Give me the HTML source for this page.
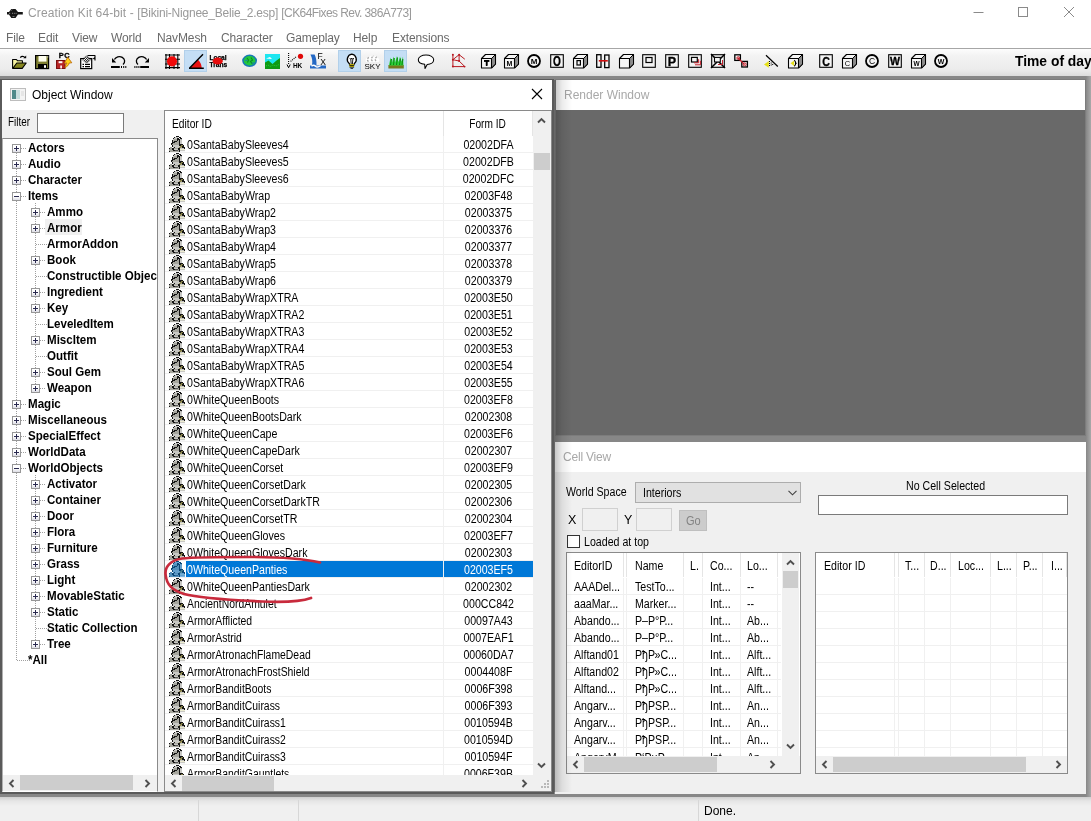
<!DOCTYPE html>
<html><head><meta charset="utf-8"><title>Creation Kit</title>
<style>
*{box-sizing:border-box}
html,body{margin:0;padding:0}
body{width:1091px;height:821px;overflow:hidden;position:relative;background:#ababab;font-family:"Liberation Sans",sans-serif;font-size:11px;color:#000}
#root{position:absolute;left:0;top:0;width:1091px;height:821px;overflow:hidden;will-change:transform}
.a{position:absolute}
.t{position:absolute;white-space:pre;line-height:14px}
#title{left:0;top:0;width:1091px;height:27px;background:#fff}
#menu{left:0;top:27px;width:1091px;height:21px;background:#fff}
#menu span{position:absolute;top:3px;font-size:12px;line-height:16px;color:#6a6a6a;white-space:pre;letter-spacing:-.12px}
#tb{left:0;top:48px;width:1091px;height:28px;border-top:1px solid #a6a6a6;background:linear-gradient(#fdfdfd 0,#f3f3f3 25%,#ececec 75%,#dcdcdc 100%)}
#tb svg{position:absolute;top:4px;width:16px;height:16px;overflow:visible}
.pr{position:absolute;top:1px;width:23px;height:22px;background:#c4def5;border:1px solid #b2d0ea}
.win{position:absolute;background:#f0f0f0}
.wt{position:absolute;left:0;top:0;right:0;height:30px;background:#fff}
.lv{position:absolute;background:#fff;border:1px solid #8a8a8a;overflow:hidden}
.row{position:absolute;left:0;height:17px;border-bottom:1px solid #f0f0f0;width:100%}
.ls{font-size:12.500px;transform:scaleX(.85);transform-origin:0 50%}
.ls.c{transform-origin:50% 50%}
.tr{position:absolute;font-weight:bold;font-size:12.500px;line-height:16px;height:16px;white-space:pre;transform:scaleX(.925);transform-origin:0 50%}
.pm{position:absolute;width:9px;height:9px;border:1px solid #979797;background:linear-gradient(#fff,#fff 50%,#dcdce4)}
.pm:before{content:"";position:absolute;left:1px;top:3px;width:5px;height:1px;background:#2a2a50}
.pm.p:after{content:"";position:absolute;left:3px;top:1px;width:1px;height:5px;background:#2a2a50}
.dh{position:absolute;height:0;border-top:1px dotted #a0a0a0}
.dv{position:absolute;width:0;border-left:1px dotted #a0a0a0}
.sb{position:absolute;background:#f0f0f0}
.th{position:absolute;background:#cdcdcd}
.arm{position:absolute;width:16px;height:16px}
.arm i{position:absolute;left:-1px;top:-1px;width:1px;height:1px;box-shadow:8px 1px #141414,9px 1px #141414,10px 1px #141414,6px 2px #141414,7px 2px #c8c8c4,8px 2px #c8c8c4,9px 2px #c8c8c4,10px 2px #f4f4f4,11px 2px #141414,12px 2px #141414,5px 3px #141414,6px 3px #c8c8c4,7px 3px #c8c8c4,8px 3px #c8c8c4,9px 3px #141414,10px 3px #141414,11px 3px #f4f4f4,12px 3px #141414,13px 3px #141414,5px 4px #c8c8c4,6px 4px #a6a69e,7px 4px #a6a69e,8px 4px #a6a69e,9px 4px #141414,10px 4px #141414,11px 4px #141414,12px 4px #c8c8c4,13px 4px #a0a0a0,4px 5px #141414,5px 5px #a6a69e,6px 5px #a6a69e,7px 5px #a6a69e,8px 5px #a6a69e,9px 5px #141414,10px 5px #a6a69e,11px 5px #141414,12px 5px #c8c8c4,13px 5px #c8c8c4,4px 6px #141414,5px 6px #a6a69e,6px 6px #141414,7px 6px #141414,8px 6px #141414,9px 6px #a6a69e,10px 6px #a6a69e,11px 6px #141414,12px 6px #c8c8c4,13px 6px #c8c8c4,4px 7px #141414,5px 7px #141414,6px 7px #141414,7px 7px #a6a69e,8px 7px #a6a69e,9px 7px #a6a69e,10px 7px #a6a69e,11px 7px #141414,12px 7px #c8c8c4,13px 7px #c8c8c4,3px 8px #141414,4px 8px #141414,5px 8px #a6a69e,6px 8px #a6a69e,7px 8px #a6a69e,8px 8px #a6a69e,9px 8px #a6a69e,10px 8px #a6a69e,11px 8px #141414,12px 8px #c8c8c4,13px 8px #c8c8c4,3px 9px #141414,4px 9px #a6a69e,5px 9px #a6a69e,6px 9px #a6a69e,7px 9px #a6a69e,8px 9px #a6a69e,9px 9px #a6a69e,10px 9px #a6a69e,11px 9px #141414,12px 9px #141414,13px 9px #141414,14px 9px #141414,4px 10px #141414,5px 10px #c8c8c4,6px 10px #c8c8c4,7px 10px #c8c8c4,8px 10px #c8c8c4,9px 10px #c8c8c4,10px 10px #c8c8c4,11px 10px #141414,12px 10px #141414,13px 10px #868048,14px 10px #868048,15px 10px #141414,4px 11px #141414,5px 11px #c8c8c4,6px 11px #c8c8c4,7px 11px #c8c8c4,8px 11px #c8c8c4,9px 11px #c8c8c4,10px 11px #c8c8c4,11px 11px #c8c8c4,12px 11px #868048,13px 11px #868048,14px 11px #141414,15px 11px #141414,2px 12px #a6a69e,3px 12px #a6a69e,5px 12px #c8c8c4,6px 12px #141414,7px 12px #c8c8c4,8px 12px #c8c8c4,9px 12px #c8c8c4,10px 12px #c8c8c4,11px 12px #868048,12px 12px #868048,13px 12px #aaa678,14px 12px #141414,15px 12px #141414,16px 12px #141414,1px 13px #141414,2px 13px #a6a69e,3px 13px #a6a69e,4px 13px #141414,5px 13px #141414,6px 13px #a6a69e,7px 13px #a6a69e,8px 13px #a6a69e,9px 13px #a6a69e,10px 13px #141414,11px 13px #141414,12px 13px #c8c8c4,13px 13px #c8c8c4,14px 13px #c8c8c4,15px 13px #c8c8c4,16px 13px #141414,1px 14px #a6a69e,2px 14px #a6a69e,3px 14px #a6a69e,4px 14px #141414,5px 14px #141414,6px 14px #c8c8c4,7px 14px #c8c8c4,8px 14px #c8c8c4,9px 14px #c8c8c4,10px 14px #141414,11px 14px #141414,12px 14px #ecebd0,13px 14px #ecebd0,14px 14px #ecebd0,15px 14px #ecebd0,16px 14px #ecebd0,1px 15px #a6a69e,2px 15px #a6a69e,3px 15px #a6a69e,4px 15px #a6a69e,5px 15px #141414,6px 15px #141414,7px 15px #555,8px 15px #555,9px 15px #555,10px 15px #a6a69e,11px 15px #141414,12px 15px #c8c8c4,13px 15px #c8c8c4,14px 15px #c8c8c4,15px 15px #c8c8c4,16px 15px #c8c8c4,1px 16px #141414,2px 16px #a6a69e,3px 16px #a6a69e,4px 16px #a6a69e,5px 16px #a6a69e,6px 16px #a6a69e,7px 16px #a6a69e,8px 16px #a6a69e,9px 16px #a6a69e,10px 16px #a6a69e,11px 16px #141414,12px 16px #f4f4f4,13px 16px #f4f4f4,14px 16px #f4f4f4,15px 16px #f4f4f4,16px 16px #f4f4f4}
.arm.s i{box-shadow:8px 1px #0a4675,9px 1px #0a4675,10px 1px #0a4675,6px 2px #0a4675,7px 2px #64a0cd,8px 2px #64a0cd,9px 2px #64a0cd,10px 2px #7ab6e5,11px 2px #0a4675,12px 2px #0a4675,5px 3px #0a4675,6px 3px #64a0cd,7px 3px #64a0cd,8px 3px #64a0cd,9px 3px #0a4675,10px 3px #0a4675,11px 3px #7ab6e5,12px 3px #0a4675,13px 3px #0a4675,5px 4px #64a0cd,6px 4px #538fba,7px 4px #538fba,8px 4px #538fba,9px 4px #0a4675,10px 4px #0a4675,11px 4px #0a4675,12px 4px #64a0cd,13px 4px #508cbb,4px 5px #0a4675,5px 5px #538fba,6px 5px #538fba,7px 5px #538fba,8px 5px #538fba,9px 5px #0a4675,10px 5px #538fba,11px 5px #0a4675,12px 5px #64a0cd,13px 5px #64a0cd,4px 6px #0a4675,5px 6px #538fba,6px 6px #0a4675,7px 6px #0a4675,8px 6px #0a4675,9px 6px #538fba,10px 6px #538fba,11px 6px #0a4675,12px 6px #64a0cd,13px 6px #64a0cd,4px 7px #0a4675,5px 7px #0a4675,6px 7px #0a4675,7px 7px #538fba,8px 7px #538fba,9px 7px #538fba,10px 7px #538fba,11px 7px #0a4675,12px 7px #64a0cd,13px 7px #64a0cd,3px 8px #0a4675,4px 8px #0a4675,5px 8px #538fba,6px 8px #538fba,7px 8px #538fba,8px 8px #538fba,9px 8px #538fba,10px 8px #538fba,11px 8px #0a4675,12px 8px #64a0cd,13px 8px #64a0cd,3px 9px #0a4675,4px 9px #538fba,5px 9px #538fba,6px 9px #538fba,7px 9px #538fba,8px 9px #538fba,9px 9px #538fba,10px 9px #538fba,11px 9px #0a4675,12px 9px #0a4675,13px 9px #0a4675,14px 9px #0a4675,4px 10px #0a4675,5px 10px #64a0cd,6px 10px #64a0cd,7px 10px #64a0cd,8px 10px #64a0cd,9px 10px #64a0cd,10px 10px #64a0cd,11px 10px #0a4675,12px 10px #0a4675,13px 10px #437c8f,14px 10px #437c8f,15px 10px #0a4675,4px 11px #0a4675,5px 11px #64a0cd,6px 11px #64a0cd,7px 11px #64a0cd,8px 11px #64a0cd,9px 11px #64a0cd,10px 11px #64a0cd,11px 11px #64a0cd,12px 11px #437c8f,13px 11px #437c8f,14px 11px #0a4675,15px 11px #0a4675,2px 12px #538fba,3px 12px #538fba,5px 12px #64a0cd,6px 12px #0a4675,7px 12px #64a0cd,8px 12px #64a0cd,9px 12px #64a0cd,10px 12px #64a0cd,11px 12px #437c8f,12px 12px #437c8f,13px 12px #558fa7,14px 12px #0a4675,15px 12px #0a4675,16px 12px #0a4675,1px 13px #0a4675,2px 13px #538fba,3px 13px #538fba,4px 13px #0a4675,5px 13px #0a4675,6px 13px #538fba,7px 13px #538fba,8px 13px #538fba,9px 13px #538fba,10px 13px #0a4675,11px 13px #0a4675,12px 13px #64a0cd,13px 13px #64a0cd,14px 13px #64a0cd,15px 13px #64a0cd,16px 13px #0a4675,1px 14px #538fba,2px 14px #538fba,3px 14px #538fba,4px 14px #0a4675,5px 14px #0a4675,6px 14px #64a0cd,7px 14px #64a0cd,8px 14px #64a0cd,9px 14px #64a0cd,10px 14px #0a4675,11px 14px #0a4675,12px 14px #76b1d3,13px 14px #76b1d3,14px 14px #76b1d3,15px 14px #76b1d3,16px 14px #76b1d3,1px 15px #538fba,2px 15px #538fba,3px 15px #538fba,4px 15px #538fba,5px 15px #0a4675,6px 15px #0a4675,7px 15px #2a6696,8px 15px #2a6696,9px 15px #2a6696,10px 15px #538fba,11px 15px #0a4675,12px 15px #64a0cd,13px 15px #64a0cd,14px 15px #64a0cd,15px 15px #64a0cd,16px 15px #64a0cd,1px 16px #0a4675,2px 16px #538fba,3px 16px #538fba,4px 16px #538fba,5px 16px #538fba,6px 16px #538fba,7px 16px #538fba,8px 16px #538fba,9px 16px #538fba,10px 16px #538fba,11px 16px #0a4675,12px 16px #7ab6e5,13px 16px #7ab6e5,14px 16px #7ab6e5,15px 16px #7ab6e5,16px 16px #7ab6e5}
.hd{position:absolute;top:0;height:24px;border-right:1px solid #e5e5e5;background:#fff}
</style></head>
<body><div id="root">
<div id="title" class="a"><svg class="a" style="left:0;top:0" width="27" height="27" viewBox="0 0 27 27"><path d="M7 12h2l2.300-3h4.200l2.500 3h4.800v2.600h-4.800l-2.500 3.300h-4.200l-2.300-3.300h-2z" fill="#161616"/><path d="M9 13.300h2M12 13.300h5" stroke="#9a9a9a" stroke-width=".9" stroke-dasharray="1 .8"/><path d="M11 10.800l1.200-1.300M12.500 16.500h2" stroke="#8a8a8a" stroke-width=".8"/></svg><span class="t" style="left:28px;top:5px;font-size:12px;line-height:16px;color:#999;letter-spacing:-0.22px"><span style="letter-spacing:.12px">Creation Kit 64-bit - </span>[Bikini-Nignee_Belie_2.esp] <span style="letter-spacing:-.58px">[CK64Fixes Rev. 386A773]</span></span><svg class="a" style="left:960px;top:0" width="131" height="27" viewBox="0 0 131 27" fill="none" stroke="#8a8a8a" stroke-width="1"><path d="M13.5 12.5h10"/><rect x="58.5" y="7.5" width="9" height="9"/><path d="M104 7l10 10M114 7l-10 10"/></svg></div>
<div id="menu" class="a"><span style="left:6px">File</span><span style="left:38px">Edit</span><span style="left:72px">View</span><span style="left:111px">World</span><span style="left:157px">NavMesh</span><span style="left:221px">Character</span><span style="left:286px">Gameplay</span><span style="left:353px">Help</span><span style="left:392px">Extensions</span></div>
<div id="tb" class="a"><div class="pr" style="left:184px"></div><div class="pr" style="left:338px"></div><div class="pr" style="left:384px"></div><svg style="left:12px" viewBox="0 0 16 16"><path d="M.6 15.400V6.500h3.800l1 1.200h5v2.300" fill="#f6f3a0" stroke="#000" stroke-width="1.100" stroke-linejoin="round"/><path d="M.8 15.400l4-5.400h9.400l-4 5.400z" fill="#86861e" stroke="#000" stroke-width="1.100" stroke-linejoin="round"/><path d="M8.300 4.600c1-1.600 3.600-1.700 4.700.2" fill="none" stroke="#000" stroke-width="1.100"/><path d="M11.400 5.200h2.800v-2.600z" fill="#000"/></svg><svg style="left:35px" viewBox="0 0 16 16"><rect x=".6" y="2.600" width="13" height="13" fill="#7e7e30" stroke="#000" stroke-width="1.200"/><rect x="3.500" y="3" width="8" height="5.600" fill="#fffff0"/><rect x="3" y="11" width="9" height="5" fill="#000"/><rect x="9" y="12.200" width="2" height="2.600" fill="#fff"/><rect x="12.300" y="3.400" width="1" height="1" fill="#fff"/></svg><svg style="left:56px" viewBox="0 0 16 16"><text x="8.500" y="4.900" font-size="7.400" text-anchor="middle" letter-spacing=".5" stroke="#000" stroke-width=".3" font-family="Liberation Sans,sans-serif" font-weight="bold">PC</text><rect x=".5" y="7.500" width="8.500" height="8" fill="#b82525" stroke="#7a1010"/><rect x="2.600" y="8.200" width="3.800" height="2" fill="#fff"/><rect x="4.300" y="12.500" width="1.600" height="3" fill="#fff"/><path d="M8.800 14.500c.8-2 1.300-3.300 2.200-4.500l-2.800 .2 3.600-6 4 5.600-2.600 .2c-.4 2-1.800 3.600-4.400 4.500z" fill="#ffd21a" stroke="#b86000" stroke-width=".8" stroke-linejoin="round"/></svg><svg style="left:80px" viewBox="0 0 16 16"><rect x=".7" y="5.600" width="11" height="10" fill="#fff" stroke="#000" stroke-width="1.200"/><path d="M2.500 11.400h1.500M5 11.400h5M2.500 13.600h1.500M5 13.600h5" stroke="#000" stroke-width="1.200"/><path d="M2.400 7.400l4.200-4.600 4.200 4.600-4.200 2.600z" fill="#fff"/><path d="M2.400 7.400l4.200-4.600 4.200 4.600M3.800 8.300l4.200-4.400M5.200 9.200l4.200-4.400M9.400 8.300l-4.200-4.400M8 9.200l-4.200-4.400M6.600 10l-2.800-2.800M6.600 10l2.800-2.800" fill="none" stroke="#000" stroke-width=".7"/><path d="M7.500 2.500h7.500M15 2.300v5.200" stroke="#000" stroke-width="1.100" fill="none"/><path d="M15 6.300l-2.600-.2 2.600-2z" fill="#000"/></svg><svg style="left:111px" viewBox="0 0 16 16"><path d="M12 11.500a5.300 4.600 0 1 0 -8.600-5" fill="none" stroke="#000" stroke-width="1.300"/><path d="M1 5v4.400h4.200z" fill="#000"/><rect x="0" y="13" width="8.800" height="2" fill="#000"/><rect x="10" y="13" width="1" height="2"/><rect x="12.200" y="13" width="1" height="2"/><rect x="14.300" y="13" width="1" height="2"/></svg><svg style="left:134px" viewBox="0 0 16 16"><path d="M4 11.500a5.300 4.600 0 1 1 8.600-5" fill="none" stroke="#000" stroke-width="1.300"/><path d="M15 5v4.400h-4.200z" fill="#000"/><rect x="6.200" y="13" width="8.800" height="2" fill="#000"/><rect x="0.400" y="13" width="1" height="2"/><rect x="2.400" y="13" width="1" height="2"/><rect x="4.400" y="13" width="1" height="2"/></svg><svg style="left:165px" viewBox="0 0 16 16"><path d="M1 1v15M4.500 1v15M9 1v15M12.800 1v15M0 2h15M0 6.300h15M0 11h15M0 14.600h15" stroke="#000" stroke-width="1.100" fill="none"/><circle cx="7" cy="8.300" r="5.100" fill="#f00808"/></svg><svg style="left:189px" viewBox="0 0 16 16"><path d="M.4 15.300L9 6.700A12.200 12.200 0 0 1 12.700 15.300z" fill="#e81010"/><path d="M0 15.300h14.800M.4 15.300L14 1.300" stroke="#000" stroke-width="1.400" fill="none"/></svg><svg style="left:210px" viewBox="0 0 16 16"><text x="8" y="6.500" font-size="6.600" text-anchor="middle" stroke="#000" stroke-width=".25" font-family="Liberation Sans,sans-serif" font-weight="bold">Local</text><text x="8.300" y="13.700" font-size="6.600" text-anchor="middle" stroke="#000" stroke-width=".25" font-family="Liberation Sans,sans-serif" font-weight="bold">Trans</text><ellipse cx="7.700" cy="8.100" rx="5.200" ry="3.500" fill="#e80c0c"/></svg><svg style="left:242px" viewBox="0 0 16 16"><ellipse cx="7.600" cy="7.800" rx="7.400" ry="6.200" fill="#1878b4"/><ellipse cx="7.600" cy="7.800" rx="5.800" ry="4.700" fill="#22c83c"/><path d="M5 5l1.500 2-1 2.500M9 4.500l1.500 2.500-2 1.500 2 2.500" stroke="#0a8a2a" fill="none" stroke-width="1.100"/><path d="M3 8c1-1 2-1 2.500 0M10 10c1 .5 2 0 2.500-1" stroke="#1878b4" fill="none"/></svg><svg style="left:265px" viewBox="0 0 16 16"><rect x="0" y="1" width="15" height="15" fill="#1ee6f0"/><path d="M1 5.500l4-1.500 2 2z" fill="#fff"/><path d="M0 16V9.500l3.500-2 4 3.500 4-3.500 3.500-2.500V16z" fill="#0e9a14"/><path d="M1 13l2-1 2 1.500 3-1.500 3 1 3-1.500" stroke="#2cd43c" fill="none" stroke-dasharray="1 1.200"/></svg><svg style="left:287px" viewBox="0 0 16 16"><path d="M1.600 0v12" stroke="#000" stroke-width="1.100" stroke-dasharray="1 1"/><path d="M0 11.500l1.600 3.200 1.600-3.200" fill="none" stroke="#000"/><path d="M3.600 8.400l6-5" stroke="#000" stroke-width="1.100" stroke-dasharray="1 1"/><circle cx="13.500" cy="3.300" r="2.600" fill="#e00808"/><text x="10.600" y="14.700" font-size="6.500" text-anchor="middle" font-family="Liberation Sans,sans-serif" font-weight="bold">HK</text></svg><svg style="left:310px" viewBox="0 0 16 16"><path d="M.4 1.500h4.200c1.600 3 2 7 1.900 10.500h-4.500c.6-3.500 .4-7-1.600-10.500z" fill="#2468c4"/><path d="M0 12.500h16v3h-16z" fill="#2468c4"/><path d="M1.500 13.200c1.500-1.500 3-1 4 0s3.500 .6 5-.4" stroke="#fff" fill="none" stroke-width="1.300"/><text x="10" y="5.800" font-size="8.500" text-anchor="middle" font-family="Liberation Sans,sans-serif">F</text><text x="13.200" y="11.600" font-size="8.500" text-anchor="middle" font-family="Liberation Sans,sans-serif">X</text></svg><svg style="left:342px" viewBox="0 0 16 16"><path d="M9.800 1.200a5.300 5.300 0 0 1 2.600 9.300l-.6 1.300h-4l-.6-1.300a5.300 5.300 0 0 1 2.600-9.300z" fill="#fff" stroke="#000" stroke-width="1.300"/><path d="M7.800 5l1 1.500 1-1.500 1 1.500 1-1.500M8.800 6.500l.4 4.500M10.800 6.500l-.4 4.500" stroke="#000" fill="none" stroke-width=".9"/><path d="M7.500 11.800h4.600M7.500 13.400h4.600" stroke="#e4d000" stroke-width="1.200"/><path d="M7.500 12.600h4.600M7.500 14.200h4.600M8.500 15.400h2.600" stroke="#000" stroke-width=".8"/></svg><svg style="left:365px" viewBox="0 0 16 16"><path d="M1 9c-1.500-3 1-5 3-4.500 .5-2 3-2.500 4.500-1 1.500-1.500 4-.5 4 1.500 2 0 2.500 3 1 4z" fill="#fff"/><path d="M3.500 8.500c-2-1.500-1-4 1.500-4.500M7.500 8c-2-1.500-1-4 1.500-5M11 8c-1.500-1.500-.5-4 1.500-4.500" fill="none" stroke="#a8a8a8" stroke-width="1.300" stroke-dasharray="2 1"/><text x="7.500" y="16.200" font-size="8" text-anchor="middle" font-family="Liberation Sans,sans-serif">SKY</text></svg><svg style="left:388px" viewBox="0 0 16 16"><rect x=".4" y="12" width="15.400" height="3.500" fill="#78781e"/><path d="M1 12.500l1.500-8 1.500 5 1.500-6 1.500 6 2-6.500 1.500 6 1.500-5.500 1.500 5 1.500-5 .5 9z" fill="#2ed23a"/><path d="M2.500 12l1-6M5.500 12l.8-7M8.500 12l1-7.500M11.500 12l1-6.500M14 12l.8-6" stroke="#0c8a14" fill="none" stroke-width="1.100"/></svg><svg style="left:418px" viewBox="0 0 16 16"><path d="M8 2c4.300 0 7.700 2 7.700 4.700s-3 4.500-6.500 4.700L7 15.500l-.3-4.300C3 10.800 .3 9.200 .3 6.700 .3 4 3.700 2 8 2z" fill="#fff" stroke="#000" stroke-width="1.050" stroke-linejoin="round"/></svg><svg style="left:450px" viewBox="0 0 16 16"><path d="M2.900 1.800v12M2.900 13.600h12M2.900 6.700l6.200-5 5.700 4.500M9.100 1.800v6.200l5.700 5.600M2.900 6.700l6.200 1.300" fill="none" stroke="#b81820" stroke-width="1"/><g fill="#b81820"><circle cx="2.900" cy="1.800" r="1"/><circle cx="2.900" cy="6.700" r="1"/><circle cx="2.900" cy="13.600" r="1"/><circle cx="9.100" cy="1.800" r="1"/><circle cx="9.100" cy="8" r="1"/><circle cx="14.600" cy="13.600" r=".9"/></g></svg><svg style="left:481px" viewBox="0 0 16 16"><path d="M.5 5.500l4-4h10v9.500l-4 4h-10z" fill="#f6f6f6" stroke="#000" stroke-linejoin="round" stroke-width="1.100"/><path d="M10.500 5.500l4-4v9.500l-4 4z" fill="#8c8c8c" stroke="#000" stroke-linejoin="round"/><path d="M.5 5.500h10v9.500" fill="none" stroke="#000" stroke-width="1.100"/><text x="5.500" y="13.1" font-size="8.5" text-anchor="middle" font-family="Liberation Sans,sans-serif" font-weight="bold">T</text><rect x="3" y="7.200" width="5.400" height="1.700"/><rect x="4.800" y="7.200" width="1.800" height="5.500"/></svg><svg style="left:504px" viewBox="0 0 16 16"><path d="M.5 5.500l4-4h10v9.500l-4 4h-10z" fill="#f6f6f6" stroke="#000" stroke-linejoin="round" stroke-width="1.100"/><path d="M10.500 5.500l4-4v9.500l-4 4z" fill="#8c8c8c" stroke="#000" stroke-linejoin="round"/><path d="M.5 5.500h10v9.500" fill="none" stroke="#000" stroke-width="1.100"/><text x="5.500" y="12.9" font-size="7" text-anchor="middle" font-family="Liberation Sans,sans-serif" font-weight="bold">M</text></svg><svg style="left:527px" viewBox="0 0 16 16"><circle cx="7" cy="8" r="6" fill="#f4f4f4" stroke="#000" stroke-width="1.800"/><text x="7" y="10.88" font-size="8" text-anchor="middle" font-family="Liberation Sans,sans-serif" font-weight="bold">M</text></svg><svg style="left:550px" viewBox="0 0 16 16"><rect x=".7" y="1.700" width="12.600" height="12.600" fill="#f4f4f4" stroke="#000" stroke-width="1.100"/><text transform="translate(7 13.2) scale(0.72 1)" font-size="14" text-anchor="middle" stroke="#000" stroke-width=".35" font-family="Liberation Sans,sans-serif" font-weight="bold">O</text></svg><svg style="left:573px" viewBox="0 0 16 16"><path d="M.5 5.500l4-4h10v9.500l-4 4h-10z" fill="#f6f6f6" stroke="#000" stroke-linejoin="round" stroke-width="1.100"/><path d="M10.500 5.500l4-4v9.500l-4 4z" fill="#8c8c8c" stroke="#000" stroke-linejoin="round"/><path d="M.5 5.500h10v9.500" fill="none" stroke="#000" stroke-width="1.100"/><rect x="4" y="7.600" width="3.400" height="4.400" fill="none" stroke="#000" stroke-width="1.200"/></svg><svg style="left:596px" viewBox="0 0 16 16"><rect x=".7" y="1.700" width="4.300" height="12.600" fill="#f4f4f4" stroke="#000" stroke-width="1.300"/><rect x="8.700" y="2" width="4.300" height="12.600" fill="#f4f4f4" stroke="#000" stroke-width="1.300"/><rect x="2.800" y="7" width="9" height="1.600" fill="#d01010"/></svg><svg style="left:619px" viewBox="0 0 16 16"><path d="M.5 5.500l4-4h10v9.500l-4 4h-10z" fill="#f6f6f6" stroke="#000" stroke-linejoin="round" stroke-width="1.100"/><path d="M10.500 5.500l4-4v9.500l-4 4z" fill="#8c8c8c" stroke="#000" stroke-linejoin="round"/><path d="M.5 5.500h10v9.500" fill="none" stroke="#000" stroke-width="1.100"/></svg><svg style="left:642px" viewBox="0 0 16 16"><rect x=".7" y="1.700" width="12.600" height="12.600" fill="#f4f4f4" stroke="#000" stroke-width="1.100"/><rect x="4" y="4.500" width="6" height="5" fill="none" stroke="#000" stroke-width="1.200"/></svg><svg style="left:665px" viewBox="0 0 16 16"><rect x=".7" y="1.700" width="12.600" height="12.600" fill="#f4f4f4" stroke="#000" stroke-width="1.100"/><text transform="translate(7 13) scale(1 1)" font-size="12.5" text-anchor="middle" stroke="#000" stroke-width=".35" font-family="Liberation Sans,sans-serif" font-weight="bold">P</text></svg><svg style="left:688px" viewBox="0 0 16 16"><rect x=".7" y="1.700" width="12.600" height="12.600" fill="#f4f4f4" stroke="#000" stroke-width="1.100"/><rect x="3.500" y="4.400" width="5.800" height="4.600" fill="none" stroke="#000" stroke-width="1.200"/><path d="M6 9.800h4.600v-3.600M7 11.800h5.400v-4" fill="none" stroke="#c8202c" stroke-width="1"/></svg><svg style="left:711px" viewBox="0 0 16 16"><rect x=".7" y="1.700" width="12.600" height="12.600" fill="#f4f4f4" stroke="#000" stroke-width="1.100"/><path d="M0 1l14 14M14 1L0 15" stroke="#000" stroke-width="1.500"/><rect x="3.500" y="4.400" width="5.800" height="4.600" fill="#f4f4f4" stroke="#000" stroke-width="1.100"/><path d="M7 11.500h4.500v-4.500" fill="none" stroke="#c8202c"/></svg><svg style="left:734px" viewBox="0 0 16 16"><rect x=".8" y="1.800" width="5.600" height="5.600" fill="#f4f4f4" stroke="#000" stroke-width="1.300"/><rect x="7.800" y="8.400" width="5.600" height="5.600" fill="#f4f4f4" stroke="#000" stroke-width="1.300"/><path d="M4 5l6.600 6.600" stroke="#c8202c" stroke-width="1.300"/><circle cx="4.200" cy="5" r="1.300" fill="none" stroke="#c8202c"/><circle cx="10.600" cy="11.400" r="1.500" fill="none" stroke="#c8202c"/></svg><svg style="left:763px" viewBox="0 0 16 16"><path d="M3 2.300l11.800 11.200" stroke="#000" stroke-width="1.200"/><path d="M1 11.500l4.800-3.400v6.600z" fill="#e6e01a"/><path d="M6.500 8v1M6.500 10v1M6.500 12v1M8.200 9.500v1M8.200 11.500v1M9.700 11v1" stroke="#000" stroke-width="1"/></svg><svg style="left:788px" viewBox="0 0 16 16"><path d="M.5 5.500l4-4h10v9.500l-4 4h-10z" fill="#f6f6f6" stroke="#000" stroke-linejoin="round" stroke-width="1.100"/><path d="M10.500 5.500l4-4v9.500l-4 4z" fill="#8c8c8c" stroke="#000" stroke-linejoin="round"/><path d="M.5 5.500h10v9.500" fill="none" stroke="#000" stroke-width="1.100"/><path d="M2.500 10.200l3.600-2.800v5.600z" fill="#e6e01a"/><path d="M6.200 7.200c2 1.200 2 4.800 0 6M7 10.200h1.800" fill="none" stroke="#000" stroke-width="1.100"/></svg><svg style="left:819px" viewBox="0 0 16 16"><rect x=".7" y="1.700" width="12.600" height="12.600" fill="#f4f4f4" stroke="#000" stroke-width="1.100"/><text transform="translate(7 12.7) scale(0.85 1)" font-size="12.5" text-anchor="middle" stroke="#000" stroke-width=".35" font-family="Liberation Sans,sans-serif" font-weight="bold">C</text></svg><svg style="left:842px" viewBox="0 0 16 16"><path d="M.5 5.500l4-4h10v9.500l-4 4h-10z" fill="#f6f6f6" stroke="#000" stroke-linejoin="round" stroke-width="1.100"/><path d="M10.500 5.500l4-4v9.500l-4 4z" fill="#8c8c8c" stroke="#000" stroke-linejoin="round"/><path d="M.5 5.500h10v9.500" fill="none" stroke="#000" stroke-width="1.100"/><text x="5.500" y="13.0" font-size="7.5" text-anchor="middle" font-family="Liberation Sans,sans-serif">C</text></svg><svg style="left:865px" viewBox="0 0 16 16"><circle cx="7" cy="8" r="6" fill="#f4f4f4" stroke="#000" stroke-width="1.800"/><text x="7" y="11.06" font-size="8.5" text-anchor="middle" font-family="Liberation Sans,sans-serif">C</text></svg><svg style="left:888px" viewBox="0 0 16 16"><rect x=".7" y="1.700" width="12.600" height="12.600" fill="#f4f4f4" stroke="#000" stroke-width="1.100"/><text transform="translate(7 12) scale(1 1)" font-size="10.5" text-anchor="middle" stroke="#000" stroke-width=".35" font-family="Liberation Sans,sans-serif" font-weight="bold">W</text></svg><svg style="left:911px" viewBox="0 0 16 16"><path d="M.5 5.500l4-4h10v9.500l-4 4h-10z" fill="#f6f6f6" stroke="#000" stroke-linejoin="round" stroke-width="1.100"/><path d="M10.500 5.500l4-4v9.500l-4 4z" fill="#8c8c8c" stroke="#000" stroke-linejoin="round"/><path d="M.5 5.500h10v9.500" fill="none" stroke="#000" stroke-width="1.100"/><text x="5.500" y="12.7" font-size="6.5" text-anchor="middle" font-family="Liberation Sans,sans-serif" font-weight="bold">W</text></svg><svg style="left:934px" viewBox="0 0 16 16"><circle cx="7" cy="8" r="6" fill="#f4f4f4" stroke="#000" stroke-width="1.800"/><text x="7" y="10.52" font-size="7" text-anchor="middle" font-family="Liberation Sans,sans-serif" font-weight="bold">W</text></svg><span class="t" style="left:1015px;top:4px;font-size:14.500px;font-weight:bold;line-height:16px;transform:scaleX(.955);transform-origin:0 50%">Time of day</span></div>
<div class="a" style="left:0;top:76px;width:1091px;height:721px;background:linear-gradient(90deg,#878787 0,#878787 1086px,#a9a9a9 1091px)"></div><div class="a" style="left:0;top:79px;width:554px;height:715px;background:#5a5a5a"></div><div class="win" id="ow" style="left:2px;top:80px;width:550px;height:712px"><div class="wt"></div><svg class="a" style="left:8px;top:8px" width="16" height="13" viewBox="0 0 16 13"><rect x="0.5" y="0.5" width="15" height="12" fill="#f4f4f4" stroke="#bdbdbd"/><rect x="2" y="2" width="4" height="9" fill="#4f8a8a"/><rect x="6" y="2" width="4" height="9" fill="#c9dede"/><rect x="11" y="3" width="3" height="5" fill="#e6e6e6"/></svg><span class="t" style="left:30px;top:7px;font-size:12px;line-height:16px;color:#000">Object Window</span><svg class="a" style="left:529px;top:8px" width="12" height="12" viewBox="0 0 12 12" stroke="#000" stroke-width="1.1" fill="none"><path d="M1 1l10 10M11 1L1 11"/></svg><span class="t ls" style="left:6px;top:35px;transform:scaleX(.79)">Filter</span><div class="a" style="left:35px;top:33px;width:87px;height:20px;background:#fff;border:1px solid #7a7a7a"></div><div class="lv" id="tree" style="left:0;top:58px;width:156px;height:654px;border-left-color:#b0b0b0;border-bottom-color:#fff"><div class="dv" style="left:13px;top:8px;height:513px"></div><div class="dv" style="left:32px;top:64px;height:185px"></div><div class="dv" style="left:32px;top:336px;height:169px"></div><div class="dh" style="left:14px;top:9px;width:9px"></div><div class="pm p" style="left:9px;top:5px"></div><span class="tr" style="left:25px;top:1px">Actors</span><div class="dh" style="left:14px;top:25px;width:9px"></div><div class="pm p" style="left:9px;top:21px"></div><span class="tr" style="left:25px;top:17px">Audio</span><div class="dh" style="left:14px;top:41px;width:9px"></div><div class="pm p" style="left:9px;top:37px"></div><span class="tr" style="left:25px;top:33px">Character</span><div class="dh" style="left:14px;top:57px;width:9px"></div><div class="pm" style="left:9px;top:53px"></div><span class="tr" style="left:25px;top:49px">Items</span><div class="dh" style="left:33px;top:73px;width:9px"></div><div class="pm p" style="left:28px;top:69px"></div><span class="tr" style="left:44px;top:65px">Ammo</span><div class="dh" style="left:33px;top:89px;width:9px"></div><div class="pm p" style="left:28px;top:85px"></div><div class="a" style="left:42px;top:80px;width:37px;height:16px;background:#f0f0f0"></div><span class="tr" style="left:44px;top:81px">Armor</span><div class="dh" style="left:33px;top:105px;width:13px"></div><span class="tr" style="left:44px;top:97px">ArmorAddon</span><div class="dh" style="left:33px;top:121px;width:9px"></div><div class="pm p" style="left:28px;top:117px"></div><span class="tr" style="left:44px;top:113px">Book</span><div class="dh" style="left:33px;top:137px;width:13px"></div><span class="tr" style="left:44px;top:129px">Constructible Objec</span><div class="dh" style="left:33px;top:153px;width:9px"></div><div class="pm p" style="left:28px;top:149px"></div><span class="tr" style="left:44px;top:145px">Ingredient</span><div class="dh" style="left:33px;top:169px;width:9px"></div><div class="pm p" style="left:28px;top:165px"></div><span class="tr" style="left:44px;top:161px">Key</span><div class="dh" style="left:33px;top:185px;width:13px"></div><span class="tr" style="left:44px;top:177px">LeveledItem</span><div class="dh" style="left:33px;top:201px;width:9px"></div><div class="pm p" style="left:28px;top:197px"></div><span class="tr" style="left:44px;top:193px">MiscItem</span><div class="dh" style="left:33px;top:217px;width:13px"></div><span class="tr" style="left:44px;top:209px">Outfit</span><div class="dh" style="left:33px;top:233px;width:9px"></div><div class="pm p" style="left:28px;top:229px"></div><span class="tr" style="left:44px;top:225px">Soul Gem</span><div class="dh" style="left:33px;top:249px;width:9px"></div><div class="pm p" style="left:28px;top:245px"></div><span class="tr" style="left:44px;top:241px">Weapon</span><div class="dh" style="left:14px;top:265px;width:9px"></div><div class="pm p" style="left:9px;top:261px"></div><span class="tr" style="left:25px;top:257px">Magic</span><div class="dh" style="left:14px;top:281px;width:9px"></div><div class="pm p" style="left:9px;top:277px"></div><span class="tr" style="left:25px;top:273px">Miscellaneous</span><div class="dh" style="left:14px;top:297px;width:9px"></div><div class="pm p" style="left:9px;top:293px"></div><span class="tr" style="left:25px;top:289px">SpecialEffect</span><div class="dh" style="left:14px;top:313px;width:9px"></div><div class="pm p" style="left:9px;top:309px"></div><span class="tr" style="left:25px;top:305px">WorldData</span><div class="dh" style="left:14px;top:329px;width:9px"></div><div class="pm" style="left:9px;top:325px"></div><span class="tr" style="left:25px;top:321px">WorldObjects</span><div class="dh" style="left:33px;top:345px;width:9px"></div><div class="pm p" style="left:28px;top:341px"></div><span class="tr" style="left:44px;top:337px">Activator</span><div class="dh" style="left:33px;top:361px;width:9px"></div><div class="pm p" style="left:28px;top:357px"></div><span class="tr" style="left:44px;top:353px">Container</span><div class="dh" style="left:33px;top:377px;width:9px"></div><div class="pm p" style="left:28px;top:373px"></div><span class="tr" style="left:44px;top:369px">Door</span><div class="dh" style="left:33px;top:393px;width:9px"></div><div class="pm p" style="left:28px;top:389px"></div><span class="tr" style="left:44px;top:385px">Flora</span><div class="dh" style="left:33px;top:409px;width:9px"></div><div class="pm p" style="left:28px;top:405px"></div><span class="tr" style="left:44px;top:401px">Furniture</span><div class="dh" style="left:33px;top:425px;width:9px"></div><div class="pm p" style="left:28px;top:421px"></div><span class="tr" style="left:44px;top:417px">Grass</span><div class="dh" style="left:33px;top:441px;width:9px"></div><div class="pm p" style="left:28px;top:437px"></div><span class="tr" style="left:44px;top:433px">Light</span><div class="dh" style="left:33px;top:457px;width:9px"></div><div class="pm p" style="left:28px;top:453px"></div><span class="tr" style="left:44px;top:449px">MovableStatic</span><div class="dh" style="left:33px;top:473px;width:9px"></div><div class="pm p" style="left:28px;top:469px"></div><span class="tr" style="left:44px;top:465px">Static</span><div class="dh" style="left:33px;top:489px;width:13px"></div><span class="tr" style="left:44px;top:481px">Static Collection</span><div class="dh" style="left:33px;top:505px;width:9px"></div><div class="pm p" style="left:28px;top:501px"></div><span class="tr" style="left:44px;top:497px">Tree</span><div class="dh" style="left:14px;top:521px;width:13px"></div><span class="tr" style="left:25px;top:513px">*All</span><div class="sb" style="left:0;top:636px;width:154px;height:16px"><div class="th" style="left:17px;top:0;width:113px;height:15px"></div><svg class="a" style="left:5px;top:4px" width="7" height="9" viewBox="0 0 7 9" fill="none" stroke="#505050" stroke-width="1.900"><path d="M5.5 1L2 4.5 5.5 8"/></svg><svg class="a" style="left:141px;top:4px" width="7" height="9" viewBox="0 0 7 9" fill="none" stroke="#505050" stroke-width="1.900"><path d="M1.5 1L5 4.5 1.5 8"/></svg></div></div>
<div class="lv" id="list" style="left:162px;top:30px;width:388px;height:682px"><div class="a" style="left:0;top:1px;width:386px;height:679px"><div class="hd" style="left:0;top:-1px;height:25px;width:279px"></div><div class="hd" style="left:279px;top:-1px;height:25px;width:89px"></div><span class="t ls" style="left:7px;top:5px;transform:scaleX(.82)">Editor ID</span><span class="t ls c" style="left:278px;top:5px;width:89px;text-align:center;transform:scaleX(.81)">Form ID</span><div class="row" style="top:24px;width:368px"><div class="a" style="left:278px;top:0;width:1px;height:17px;background:#f0f0f0"></div><span class="arm" style="left:4px;top:0"><i></i></span><span class="t ls" style="left:22px;top:2px">0SantaBabySleeves4</span><span class="t ls c" style="left:279px;top:2px;width:89px;text-align:center">02002DFA</span></div><div class="row" style="top:41px;width:368px"><div class="a" style="left:278px;top:0;width:1px;height:17px;background:#f0f0f0"></div><span class="arm" style="left:4px;top:0"><i></i></span><span class="t ls" style="left:22px;top:2px">0SantaBabySleeves5</span><span class="t ls c" style="left:279px;top:2px;width:89px;text-align:center">02002DFB</span></div><div class="row" style="top:58px;width:368px"><div class="a" style="left:278px;top:0;width:1px;height:17px;background:#f0f0f0"></div><span class="arm" style="left:4px;top:0"><i></i></span><span class="t ls" style="left:22px;top:2px">0SantaBabySleeves6</span><span class="t ls c" style="left:279px;top:2px;width:89px;text-align:center">02002DFC</span></div><div class="row" style="top:75px;width:368px"><div class="a" style="left:278px;top:0;width:1px;height:17px;background:#f0f0f0"></div><span class="arm" style="left:4px;top:0"><i></i></span><span class="t ls" style="left:22px;top:2px">0SantaBabyWrap</span><span class="t ls c" style="left:279px;top:2px;width:89px;text-align:center">02003F48</span></div><div class="row" style="top:92px;width:368px"><div class="a" style="left:278px;top:0;width:1px;height:17px;background:#f0f0f0"></div><span class="arm" style="left:4px;top:0"><i></i></span><span class="t ls" style="left:22px;top:2px">0SantaBabyWrap2</span><span class="t ls c" style="left:279px;top:2px;width:89px;text-align:center">02003375</span></div><div class="row" style="top:109px;width:368px"><div class="a" style="left:278px;top:0;width:1px;height:17px;background:#f0f0f0"></div><span class="arm" style="left:4px;top:0"><i></i></span><span class="t ls" style="left:22px;top:2px">0SantaBabyWrap3</span><span class="t ls c" style="left:279px;top:2px;width:89px;text-align:center">02003376</span></div><div class="row" style="top:126px;width:368px"><div class="a" style="left:278px;top:0;width:1px;height:17px;background:#f0f0f0"></div><span class="arm" style="left:4px;top:0"><i></i></span><span class="t ls" style="left:22px;top:2px">0SantaBabyWrap4</span><span class="t ls c" style="left:279px;top:2px;width:89px;text-align:center">02003377</span></div><div class="row" style="top:143px;width:368px"><div class="a" style="left:278px;top:0;width:1px;height:17px;background:#f0f0f0"></div><span class="arm" style="left:4px;top:0"><i></i></span><span class="t ls" style="left:22px;top:2px">0SantaBabyWrap5</span><span class="t ls c" style="left:279px;top:2px;width:89px;text-align:center">02003378</span></div><div class="row" style="top:160px;width:368px"><div class="a" style="left:278px;top:0;width:1px;height:17px;background:#f0f0f0"></div><span class="arm" style="left:4px;top:0"><i></i></span><span class="t ls" style="left:22px;top:2px">0SantaBabyWrap6</span><span class="t ls c" style="left:279px;top:2px;width:89px;text-align:center">02003379</span></div><div class="row" style="top:177px;width:368px"><div class="a" style="left:278px;top:0;width:1px;height:17px;background:#f0f0f0"></div><span class="arm" style="left:4px;top:0"><i></i></span><span class="t ls" style="left:22px;top:2px">0SantaBabyWrapXTRA</span><span class="t ls c" style="left:279px;top:2px;width:89px;text-align:center">02003E50</span></div><div class="row" style="top:194px;width:368px"><div class="a" style="left:278px;top:0;width:1px;height:17px;background:#f0f0f0"></div><span class="arm" style="left:4px;top:0"><i></i></span><span class="t ls" style="left:22px;top:2px">0SantaBabyWrapXTRA2</span><span class="t ls c" style="left:279px;top:2px;width:89px;text-align:center">02003E51</span></div><div class="row" style="top:211px;width:368px"><div class="a" style="left:278px;top:0;width:1px;height:17px;background:#f0f0f0"></div><span class="arm" style="left:4px;top:0"><i></i></span><span class="t ls" style="left:22px;top:2px">0SantaBabyWrapXTRA3</span><span class="t ls c" style="left:279px;top:2px;width:89px;text-align:center">02003E52</span></div><div class="row" style="top:228px;width:368px"><div class="a" style="left:278px;top:0;width:1px;height:17px;background:#f0f0f0"></div><span class="arm" style="left:4px;top:0"><i></i></span><span class="t ls" style="left:22px;top:2px">0SantaBabyWrapXTRA4</span><span class="t ls c" style="left:279px;top:2px;width:89px;text-align:center">02003E53</span></div><div class="row" style="top:245px;width:368px"><div class="a" style="left:278px;top:0;width:1px;height:17px;background:#f0f0f0"></div><span class="arm" style="left:4px;top:0"><i></i></span><span class="t ls" style="left:22px;top:2px">0SantaBabyWrapXTRA5</span><span class="t ls c" style="left:279px;top:2px;width:89px;text-align:center">02003E54</span></div><div class="row" style="top:262px;width:368px"><div class="a" style="left:278px;top:0;width:1px;height:17px;background:#f0f0f0"></div><span class="arm" style="left:4px;top:0"><i></i></span><span class="t ls" style="left:22px;top:2px">0SantaBabyWrapXTRA6</span><span class="t ls c" style="left:279px;top:2px;width:89px;text-align:center">02003E55</span></div><div class="row" style="top:279px;width:368px"><div class="a" style="left:278px;top:0;width:1px;height:17px;background:#f0f0f0"></div><span class="arm" style="left:4px;top:0"><i></i></span><span class="t ls" style="left:22px;top:2px">0WhiteQueenBoots</span><span class="t ls c" style="left:279px;top:2px;width:89px;text-align:center">02003EF8</span></div><div class="row" style="top:296px;width:368px"><div class="a" style="left:278px;top:0;width:1px;height:17px;background:#f0f0f0"></div><span class="arm" style="left:4px;top:0"><i></i></span><span class="t ls" style="left:22px;top:2px">0WhiteQueenBootsDark</span><span class="t ls c" style="left:279px;top:2px;width:89px;text-align:center">02002308</span></div><div class="row" style="top:313px;width:368px"><div class="a" style="left:278px;top:0;width:1px;height:17px;background:#f0f0f0"></div><span class="arm" style="left:4px;top:0"><i></i></span><span class="t ls" style="left:22px;top:2px">0WhiteQueenCape</span><span class="t ls c" style="left:279px;top:2px;width:89px;text-align:center">02003EF6</span></div><div class="row" style="top:330px;width:368px"><div class="a" style="left:278px;top:0;width:1px;height:17px;background:#f0f0f0"></div><span class="arm" style="left:4px;top:0"><i></i></span><span class="t ls" style="left:22px;top:2px">0WhiteQueenCapeDark</span><span class="t ls c" style="left:279px;top:2px;width:89px;text-align:center">02002307</span></div><div class="row" style="top:347px;width:368px"><div class="a" style="left:278px;top:0;width:1px;height:17px;background:#f0f0f0"></div><span class="arm" style="left:4px;top:0"><i></i></span><span class="t ls" style="left:22px;top:2px">0WhiteQueenCorset</span><span class="t ls c" style="left:279px;top:2px;width:89px;text-align:center">02003EF9</span></div><div class="row" style="top:364px;width:368px"><div class="a" style="left:278px;top:0;width:1px;height:17px;background:#f0f0f0"></div><span class="arm" style="left:4px;top:0"><i></i></span><span class="t ls" style="left:22px;top:2px">0WhiteQueenCorsetDark</span><span class="t ls c" style="left:279px;top:2px;width:89px;text-align:center">02002305</span></div><div class="row" style="top:381px;width:368px"><div class="a" style="left:278px;top:0;width:1px;height:17px;background:#f0f0f0"></div><span class="arm" style="left:4px;top:0"><i></i></span><span class="t ls" style="left:22px;top:2px">0WhiteQueenCorsetDarkTR</span><span class="t ls c" style="left:279px;top:2px;width:89px;text-align:center">02002306</span></div><div class="row" style="top:398px;width:368px"><div class="a" style="left:278px;top:0;width:1px;height:17px;background:#f0f0f0"></div><span class="arm" style="left:4px;top:0"><i></i></span><span class="t ls" style="left:22px;top:2px">0WhiteQueenCorsetTR</span><span class="t ls c" style="left:279px;top:2px;width:89px;text-align:center">02002304</span></div><div class="row" style="top:415px;width:368px"><div class="a" style="left:278px;top:0;width:1px;height:17px;background:#f0f0f0"></div><span class="arm" style="left:4px;top:0"><i></i></span><span class="t ls" style="left:22px;top:2px">0WhiteQueenGloves</span><span class="t ls c" style="left:279px;top:2px;width:89px;text-align:center">02003EF7</span></div><div class="row" style="top:432px;width:368px"><div class="a" style="left:278px;top:0;width:1px;height:17px;background:#f0f0f0"></div><span class="arm" style="left:4px;top:0"><i></i></span><span class="t ls" style="left:22px;top:2px">0WhiteQueenGlovesDark</span><span class="t ls c" style="left:279px;top:2px;width:89px;text-align:center">02002303</span></div><div class="row" style="top:449px;width:368px"><div class="a" style="left:21px;top:0;width:347px;height:16px;background:#0078d7"></div><div class="a" style="left:278px;top:0;width:1px;height:17px;background:#f0f0f0"></div><span class="arm s" style="left:4px;top:0"><i></i></span><span class="t ls" style="left:22px;top:2px;color:#fff">0WhiteQueenPanties</span><span class="t ls c" style="left:279px;top:2px;width:89px;text-align:center;color:#fff">02003EF5</span></div><div class="row" style="top:466px;width:368px"><div class="a" style="left:278px;top:0;width:1px;height:17px;background:#f0f0f0"></div><span class="arm" style="left:4px;top:0"><i></i></span><span class="t ls" style="left:22px;top:2px">0WhiteQueenPantiesDark</span><span class="t ls c" style="left:279px;top:2px;width:89px;text-align:center">02002302</span></div><div class="row" style="top:483px;width:368px"><div class="a" style="left:278px;top:0;width:1px;height:17px;background:#f0f0f0"></div><span class="arm" style="left:4px;top:0"><i></i></span><span class="t ls" style="left:22px;top:2px;transform:scaleX(.832)">AncientNordAmulet</span><span class="t ls c" style="left:279px;top:2px;width:89px;text-align:center">000CC842</span></div><div class="row" style="top:500px;width:368px"><div class="a" style="left:278px;top:0;width:1px;height:17px;background:#f0f0f0"></div><span class="arm" style="left:4px;top:0"><i></i></span><span class="t ls" style="left:22px;top:2px;transform:scaleX(.832)">ArmorAfflicted</span><span class="t ls c" style="left:279px;top:2px;width:89px;text-align:center">00097A43</span></div><div class="row" style="top:517px;width:368px"><div class="a" style="left:278px;top:0;width:1px;height:17px;background:#f0f0f0"></div><span class="arm" style="left:4px;top:0"><i></i></span><span class="t ls" style="left:22px;top:2px;transform:scaleX(.832)">ArmorAstrid</span><span class="t ls c" style="left:279px;top:2px;width:89px;text-align:center">0007EAF1</span></div><div class="row" style="top:534px;width:368px"><div class="a" style="left:278px;top:0;width:1px;height:17px;background:#f0f0f0"></div><span class="arm" style="left:4px;top:0"><i></i></span><span class="t ls" style="left:22px;top:2px;transform:scaleX(.832)">ArmorAtronachFlameDead</span><span class="t ls c" style="left:279px;top:2px;width:89px;text-align:center">00060DA7</span></div><div class="row" style="top:551px;width:368px"><div class="a" style="left:278px;top:0;width:1px;height:17px;background:#f0f0f0"></div><span class="arm" style="left:4px;top:0"><i></i></span><span class="t ls" style="left:22px;top:2px;transform:scaleX(.832)">ArmorAtronachFrostShield</span><span class="t ls c" style="left:279px;top:2px;width:89px;text-align:center">0004408F</span></div><div class="row" style="top:568px;width:368px"><div class="a" style="left:278px;top:0;width:1px;height:17px;background:#f0f0f0"></div><span class="arm" style="left:4px;top:0"><i></i></span><span class="t ls" style="left:22px;top:2px;transform:scaleX(.832)">ArmorBanditBoots</span><span class="t ls c" style="left:279px;top:2px;width:89px;text-align:center">0006F398</span></div><div class="row" style="top:585px;width:368px"><div class="a" style="left:278px;top:0;width:1px;height:17px;background:#f0f0f0"></div><span class="arm" style="left:4px;top:0"><i></i></span><span class="t ls" style="left:22px;top:2px;transform:scaleX(.832)">ArmorBanditCuirass</span><span class="t ls c" style="left:279px;top:2px;width:89px;text-align:center">0006F393</span></div><div class="row" style="top:602px;width:368px"><div class="a" style="left:278px;top:0;width:1px;height:17px;background:#f0f0f0"></div><span class="arm" style="left:4px;top:0"><i></i></span><span class="t ls" style="left:22px;top:2px;transform:scaleX(.832)">ArmorBanditCuirass1</span><span class="t ls c" style="left:279px;top:2px;width:89px;text-align:center">0010594B</span></div><div class="row" style="top:619px;width:368px"><div class="a" style="left:278px;top:0;width:1px;height:17px;background:#f0f0f0"></div><span class="arm" style="left:4px;top:0"><i></i></span><span class="t ls" style="left:22px;top:2px;transform:scaleX(.832)">ArmorBanditCuirass2</span><span class="t ls c" style="left:279px;top:2px;width:89px;text-align:center">0010594D</span></div><div class="row" style="top:636px;width:368px"><div class="a" style="left:278px;top:0;width:1px;height:17px;background:#f0f0f0"></div><span class="arm" style="left:4px;top:0"><i></i></span><span class="t ls" style="left:22px;top:2px;transform:scaleX(.832)">ArmorBanditCuirass3</span><span class="t ls c" style="left:279px;top:2px;width:89px;text-align:center">0010594F</span></div><div class="row" style="top:653px;width:368px"><div class="a" style="left:278px;top:0;width:1px;height:17px;background:#f0f0f0"></div><span class="arm" style="left:4px;top:0"><i></i></span><span class="t ls" style="left:22px;top:2px;transform:scaleX(.832)">ArmorBanditGauntlets</span><span class="t ls c" style="left:279px;top:2px;width:89px;text-align:center">0006F39B</span></div><div class="sb" style="left:368px;top:-1px;width:18px;height:664px"><div class="th" style="left:1px;top:42px;width:16px;height:17px"></div><svg class="a" style="left:4px;top:6px" width="9" height="7" viewBox="0 0 9 7" fill="none" stroke="#505050" stroke-width="1.900"><path d="M1 5.5L4.5 2 8 5.5"/></svg><svg class="a" style="left:4px;top:651px" width="9" height="7" viewBox="0 0 9 7" fill="none" stroke="#505050" stroke-width="1.900"><path d="M1 1.5L4.5 5 8 1.5"/></svg></div><div class="sb" style="left:0;top:663px;width:369px;height:17px"><div class="th" style="left:17px;top:1px;width:92px;height:15px"></div><svg class="a" style="left:5px;top:4px" width="7" height="9" viewBox="0 0 7 9" fill="none" stroke="#505050" stroke-width="1.900"><path d="M5.5 1L2 4.5 5.5 8"/></svg><svg class="a" style="left:356px;top:4px" width="7" height="9" viewBox="0 0 7 9" fill="none" stroke="#505050" stroke-width="1.900"><path d="M1.5 1L5 4.5 1.5 8"/></svg></div><div class="sb" style="left:369px;top:663px;width:17px;height:17px"><svg class="a" style="left:4px;top:4px" width="12" height="12" viewBox="0 0 12 12" fill="#b8b8b8"><rect x="9" y="1" width="2" height="2"/><rect x="6" y="4" width="2" height="2"/><rect x="9" y="4" width="2" height="2"/><rect x="3" y="7" width="2" height="2"/><rect x="6" y="7" width="2" height="2"/><rect x="9" y="7" width="2" height="2"/></svg></div></div></div>
</div>
<svg class="a" style="left:160px;top:550px" width="170" height="60" viewBox="160 550 170 60" fill="none" stroke="#c82a3c" stroke-width="2.700" stroke-linecap="round"><path d="M320 562.5C305 559 280 557 250 557C220 557 195 557 182 558.5C170 560.5 165 567 165.5 574C166.5 585 172 590 184 594C200 598.5 230 600 262 601.5C285 602.5 300 602 311 598"/></svg>
<div class="a" style="left:555px;top:79px;width:531px;height:357px;background:#7c7c7c"></div><div class="a" style="left:556px;top:80px;width:529px;height:355px;background:#696969"><div class="wt"></div><span class="t" style="left:8px;top:7px;font-size:12px;line-height:16px;color:#a8a8a8">Render Window</span></div>
<div class="win" id="cv" style="left:555px;top:442px;width:531px;height:352px"><div class="wt"></div><span class="t" style="left:8px;top:7px;font-size:12px;line-height:16px;color:#a8a8a8;letter-spacing:-.2px">Cell View</span><span class="t ls" style="left:11px;top:43px">World Space</span><div class="a" style="left:80px;top:40px;width:166px;height:21px;background:#e1e1e1;border:1px solid #adadad"></div><span class="t ls" style="left:88px;top:44px">Interiors</span><svg class="a" style="left:233px;top:48px" width="9" height="6" viewBox="0 0 9 6" fill="none" stroke="#404040" stroke-width="1.100"><path d="M.5 .8l4 4 4-4"/></svg><span class="t" style="left:13px;top:71px;font-size:12.500px">X</span><div class="a" style="left:27px;top:66px;width:36px;height:23px;background:#f0f0f0;border:1px solid #d0d0d0"></div><span class="t" style="left:69px;top:71px;font-size:12.500px">Y</span><div class="a" style="left:81px;top:66px;width:36px;height:23px;background:#f0f0f0;border:1px solid #d0d0d0"></div><div class="a" style="left:124px;top:68px;width:28px;height:21px;background:#cccccc;border:1px solid #bfbfbf"></div><span class="t ls" style="left:131px;top:72px;color:#838383;font-size:13px">Go</span><div class="a" style="left:12px;top:93px;width:13px;height:13px;background:#fff;border:1px solid #333"></div><span class="t ls" style="left:29px;top:93px">Loaded at top</span><span class="t ls" style="left:351px;top:37px">No Cell Selected</span><div class="a" style="left:263px;top:53px;width:250px;height:20px;background:#fff;border:1px solid #7a7a7a"></div><div class="lv" style="left:11px;top:110px;width:235px;height:222px"><div class="hd" style="left:0px;width:57px"></div><div class="hd" style="left:57px;width:3px"></div><div class="hd" style="left:60px;width:57px"></div><div class="hd" style="left:117px;width:19px"></div><div class="hd" style="left:136px;width:38px"></div><div class="hd" style="left:174px;width:37px"></div><span class="t ls" style="left:7px;top:6px">EditorID</span><span class="t ls" style="left:68px;top:6px">Name</span><span class="t ls" style="left:123px;top:6px">L.</span><span class="t ls" style="left:143px;top:6px">Co...</span><span class="t ls" style="left:180px;top:6px">Lo...</span><div class="row" style="top:25px;width:214px"><div class="a" style="left:56px;top:0;width:1px;height:17px;background:#f0f0f0"></div><div class="a" style="left:59px;top:0;width:1px;height:17px;background:#f0f0f0"></div><div class="a" style="left:116px;top:0;width:1px;height:17px;background:#f0f0f0"></div><div class="a" style="left:135px;top:0;width:1px;height:17px;background:#f0f0f0"></div><div class="a" style="left:173px;top:0;width:1px;height:17px;background:#f0f0f0"></div><div class="a" style="left:210px;top:0;width:1px;height:17px;background:#f0f0f0"></div><span class="t ls" style="left:7px;top:2px">AAADel...</span><span class="t ls" style="left:68px;top:2px">TestTo...</span><span class="t ls" style="left:143px;top:2px">Int...</span><span class="t ls" style="left:180px;top:2px">--</span></div><div class="row" style="top:42px;width:214px"><div class="a" style="left:56px;top:0;width:1px;height:17px;background:#f0f0f0"></div><div class="a" style="left:59px;top:0;width:1px;height:17px;background:#f0f0f0"></div><div class="a" style="left:116px;top:0;width:1px;height:17px;background:#f0f0f0"></div><div class="a" style="left:135px;top:0;width:1px;height:17px;background:#f0f0f0"></div><div class="a" style="left:173px;top:0;width:1px;height:17px;background:#f0f0f0"></div><div class="a" style="left:210px;top:0;width:1px;height:17px;background:#f0f0f0"></div><span class="t ls" style="left:7px;top:2px">aaaMar...</span><span class="t ls" style="left:68px;top:2px">Marker...</span><span class="t ls" style="left:143px;top:2px">Int...</span><span class="t ls" style="left:180px;top:2px">--</span></div><div class="row" style="top:59px;width:214px"><div class="a" style="left:56px;top:0;width:1px;height:17px;background:#f0f0f0"></div><div class="a" style="left:59px;top:0;width:1px;height:17px;background:#f0f0f0"></div><div class="a" style="left:116px;top:0;width:1px;height:17px;background:#f0f0f0"></div><div class="a" style="left:135px;top:0;width:1px;height:17px;background:#f0f0f0"></div><div class="a" style="left:173px;top:0;width:1px;height:17px;background:#f0f0f0"></div><div class="a" style="left:210px;top:0;width:1px;height:17px;background:#f0f0f0"></div><span class="t ls" style="left:7px;top:2px">Abando...</span><span class="t ls" style="left:68px;top:2px">Р–Р°Р...</span><span class="t ls" style="left:143px;top:2px">Int...</span><span class="t ls" style="left:180px;top:2px">Ab...</span></div><div class="row" style="top:76px;width:214px"><div class="a" style="left:56px;top:0;width:1px;height:17px;background:#f0f0f0"></div><div class="a" style="left:59px;top:0;width:1px;height:17px;background:#f0f0f0"></div><div class="a" style="left:116px;top:0;width:1px;height:17px;background:#f0f0f0"></div><div class="a" style="left:135px;top:0;width:1px;height:17px;background:#f0f0f0"></div><div class="a" style="left:173px;top:0;width:1px;height:17px;background:#f0f0f0"></div><div class="a" style="left:210px;top:0;width:1px;height:17px;background:#f0f0f0"></div><span class="t ls" style="left:7px;top:2px">Abando...</span><span class="t ls" style="left:68px;top:2px">Р–Р°Р...</span><span class="t ls" style="left:143px;top:2px">Int...</span><span class="t ls" style="left:180px;top:2px">Ab...</span></div><div class="row" style="top:93px;width:214px"><div class="a" style="left:56px;top:0;width:1px;height:17px;background:#f0f0f0"></div><div class="a" style="left:59px;top:0;width:1px;height:17px;background:#f0f0f0"></div><div class="a" style="left:116px;top:0;width:1px;height:17px;background:#f0f0f0"></div><div class="a" style="left:135px;top:0;width:1px;height:17px;background:#f0f0f0"></div><div class="a" style="left:173px;top:0;width:1px;height:17px;background:#f0f0f0"></div><div class="a" style="left:210px;top:0;width:1px;height:17px;background:#f0f0f0"></div><span class="t ls" style="left:7px;top:2px">Alftand01</span><span class="t ls" style="left:68px;top:2px">РђР»С...</span><span class="t ls" style="left:143px;top:2px">Int...</span><span class="t ls" style="left:180px;top:2px">Alft...</span></div><div class="row" style="top:110px;width:214px"><div class="a" style="left:56px;top:0;width:1px;height:17px;background:#f0f0f0"></div><div class="a" style="left:59px;top:0;width:1px;height:17px;background:#f0f0f0"></div><div class="a" style="left:116px;top:0;width:1px;height:17px;background:#f0f0f0"></div><div class="a" style="left:135px;top:0;width:1px;height:17px;background:#f0f0f0"></div><div class="a" style="left:173px;top:0;width:1px;height:17px;background:#f0f0f0"></div><div class="a" style="left:210px;top:0;width:1px;height:17px;background:#f0f0f0"></div><span class="t ls" style="left:7px;top:2px">Alftand02</span><span class="t ls" style="left:68px;top:2px">РђР»С...</span><span class="t ls" style="left:143px;top:2px">Int...</span><span class="t ls" style="left:180px;top:2px">Alft...</span></div><div class="row" style="top:127px;width:214px"><div class="a" style="left:56px;top:0;width:1px;height:17px;background:#f0f0f0"></div><div class="a" style="left:59px;top:0;width:1px;height:17px;background:#f0f0f0"></div><div class="a" style="left:116px;top:0;width:1px;height:17px;background:#f0f0f0"></div><div class="a" style="left:135px;top:0;width:1px;height:17px;background:#f0f0f0"></div><div class="a" style="left:173px;top:0;width:1px;height:17px;background:#f0f0f0"></div><div class="a" style="left:210px;top:0;width:1px;height:17px;background:#f0f0f0"></div><span class="t ls" style="left:7px;top:2px">Alftand...</span><span class="t ls" style="left:68px;top:2px">РђР»С...</span><span class="t ls" style="left:143px;top:2px">Int...</span><span class="t ls" style="left:180px;top:2px">Alft...</span></div><div class="row" style="top:144px;width:214px"><div class="a" style="left:56px;top:0;width:1px;height:17px;background:#f0f0f0"></div><div class="a" style="left:59px;top:0;width:1px;height:17px;background:#f0f0f0"></div><div class="a" style="left:116px;top:0;width:1px;height:17px;background:#f0f0f0"></div><div class="a" style="left:135px;top:0;width:1px;height:17px;background:#f0f0f0"></div><div class="a" style="left:173px;top:0;width:1px;height:17px;background:#f0f0f0"></div><div class="a" style="left:210px;top:0;width:1px;height:17px;background:#f0f0f0"></div><span class="t ls" style="left:7px;top:2px">Angarv...</span><span class="t ls" style="left:68px;top:2px">РђРЅР...</span><span class="t ls" style="left:143px;top:2px">Int...</span><span class="t ls" style="left:180px;top:2px">An...</span></div><div class="row" style="top:161px;width:214px"><div class="a" style="left:56px;top:0;width:1px;height:17px;background:#f0f0f0"></div><div class="a" style="left:59px;top:0;width:1px;height:17px;background:#f0f0f0"></div><div class="a" style="left:116px;top:0;width:1px;height:17px;background:#f0f0f0"></div><div class="a" style="left:135px;top:0;width:1px;height:17px;background:#f0f0f0"></div><div class="a" style="left:173px;top:0;width:1px;height:17px;background:#f0f0f0"></div><div class="a" style="left:210px;top:0;width:1px;height:17px;background:#f0f0f0"></div><span class="t ls" style="left:7px;top:2px">Angarv...</span><span class="t ls" style="left:68px;top:2px">РђРЅР...</span><span class="t ls" style="left:143px;top:2px">Int...</span><span class="t ls" style="left:180px;top:2px">An...</span></div><div class="row" style="top:178px;width:214px"><div class="a" style="left:56px;top:0;width:1px;height:17px;background:#f0f0f0"></div><div class="a" style="left:59px;top:0;width:1px;height:17px;background:#f0f0f0"></div><div class="a" style="left:116px;top:0;width:1px;height:17px;background:#f0f0f0"></div><div class="a" style="left:135px;top:0;width:1px;height:17px;background:#f0f0f0"></div><div class="a" style="left:173px;top:0;width:1px;height:17px;background:#f0f0f0"></div><div class="a" style="left:210px;top:0;width:1px;height:17px;background:#f0f0f0"></div><span class="t ls" style="left:7px;top:2px">Angarv...</span><span class="t ls" style="left:68px;top:2px">РђРЅР...</span><span class="t ls" style="left:143px;top:2px">Int...</span><span class="t ls" style="left:180px;top:2px">An...</span></div><div class="row" style="top:195px;width:214px"><div class="a" style="left:56px;top:0;width:1px;height:17px;background:#f0f0f0"></div><div class="a" style="left:59px;top:0;width:1px;height:17px;background:#f0f0f0"></div><div class="a" style="left:116px;top:0;width:1px;height:17px;background:#f0f0f0"></div><div class="a" style="left:135px;top:0;width:1px;height:17px;background:#f0f0f0"></div><div class="a" style="left:173px;top:0;width:1px;height:17px;background:#f0f0f0"></div><div class="a" style="left:210px;top:0;width:1px;height:17px;background:#f0f0f0"></div><span class="t ls" style="left:7px;top:3px">AngarvM...</span><span class="t ls" style="left:68px;top:3px">Р‘РµР...</span><span class="t ls" style="left:143px;top:3px">Int...</span><span class="t ls" style="left:180px;top:3px">An...</span></div><div class="sb" style="left:215px;top:0;width:17px;height:203px"><div class="th" style="left:1px;top:18px;width:15px;height:17px"></div><svg class="a" style="left:4px;top:6px" width="9" height="7" viewBox="0 0 9 7" fill="none" stroke="#505050" stroke-width="1.900"><path d="M1 5.500L4.500 2 8 5.500"/></svg><svg class="a" style="left:4px;top:190px" width="9" height="7" viewBox="0 0 9 7" fill="none" stroke="#505050" stroke-width="1.900"><path d="M1 1.500L4.500 5 8 1.500"/></svg></div><div class="sb" style="left:0;top:203px;width:233px;height:17px"><div class="th" style="left:17px;top:1px;width:133px;height:15px"></div><svg class="a" style="left:5px;top:4px" width="7" height="9" viewBox="0 0 7 9" fill="none" stroke="#505050" stroke-width="1.900"><path d="M5.500 1L2 4.500 5.500 8"/></svg><svg class="a" style="left:202px;top:4px" width="7" height="9" viewBox="0 0 7 9" fill="none" stroke="#505050" stroke-width="1.900"><path d="M1.500 1L5 4.500 1.500 8"/></svg></div></div><div class="lv" style="left:260px;top:110px;width:253px;height:222px"><div class="hd" style="left:0px;width:79px"></div><div class="hd" style="left:79px;width:4px"></div><div class="hd" style="left:83px;width:26px"></div><div class="hd" style="left:109px;width:26px"></div><div class="hd" style="left:135px;width:40px"></div><div class="hd" style="left:175px;width:26px"></div><div class="hd" style="left:201px;width:26px"></div><div class="hd" style="left:227px;width:24px"></div><span class="t ls" style="left:8px;top:6px">Editor ID</span><span class="t ls" style="left:89px;top:6px">T...</span><span class="t ls" style="left:114px;top:6px">D...</span><span class="t ls" style="left:142px;top:6px">Loc...</span><span class="t ls" style="left:181px;top:6px">L...</span><span class="t ls" style="left:207px;top:6px">P...</span><span class="t ls" style="left:235px;top:6px">I...</span><div class="row" style="top:25px;width:251px"><div class="a" style="left:78px;top:0;width:1px;height:17px;background:#f0f0f0"></div><div class="a" style="left:82px;top:0;width:1px;height:17px;background:#f0f0f0"></div><div class="a" style="left:108px;top:0;width:1px;height:17px;background:#f0f0f0"></div><div class="a" style="left:134px;top:0;width:1px;height:17px;background:#f0f0f0"></div><div class="a" style="left:174px;top:0;width:1px;height:17px;background:#f0f0f0"></div><div class="a" style="left:200px;top:0;width:1px;height:17px;background:#f0f0f0"></div><div class="a" style="left:226px;top:0;width:1px;height:17px;background:#f0f0f0"></div></div><div class="row" style="top:42px;width:251px"><div class="a" style="left:78px;top:0;width:1px;height:17px;background:#f0f0f0"></div><div class="a" style="left:82px;top:0;width:1px;height:17px;background:#f0f0f0"></div><div class="a" style="left:108px;top:0;width:1px;height:17px;background:#f0f0f0"></div><div class="a" style="left:134px;top:0;width:1px;height:17px;background:#f0f0f0"></div><div class="a" style="left:174px;top:0;width:1px;height:17px;background:#f0f0f0"></div><div class="a" style="left:200px;top:0;width:1px;height:17px;background:#f0f0f0"></div><div class="a" style="left:226px;top:0;width:1px;height:17px;background:#f0f0f0"></div></div><div class="row" style="top:59px;width:251px"><div class="a" style="left:78px;top:0;width:1px;height:17px;background:#f0f0f0"></div><div class="a" style="left:82px;top:0;width:1px;height:17px;background:#f0f0f0"></div><div class="a" style="left:108px;top:0;width:1px;height:17px;background:#f0f0f0"></div><div class="a" style="left:134px;top:0;width:1px;height:17px;background:#f0f0f0"></div><div class="a" style="left:174px;top:0;width:1px;height:17px;background:#f0f0f0"></div><div class="a" style="left:200px;top:0;width:1px;height:17px;background:#f0f0f0"></div><div class="a" style="left:226px;top:0;width:1px;height:17px;background:#f0f0f0"></div></div><div class="row" style="top:76px;width:251px"><div class="a" style="left:78px;top:0;width:1px;height:17px;background:#f0f0f0"></div><div class="a" style="left:82px;top:0;width:1px;height:17px;background:#f0f0f0"></div><div class="a" style="left:108px;top:0;width:1px;height:17px;background:#f0f0f0"></div><div class="a" style="left:134px;top:0;width:1px;height:17px;background:#f0f0f0"></div><div class="a" style="left:174px;top:0;width:1px;height:17px;background:#f0f0f0"></div><div class="a" style="left:200px;top:0;width:1px;height:17px;background:#f0f0f0"></div><div class="a" style="left:226px;top:0;width:1px;height:17px;background:#f0f0f0"></div></div><div class="row" style="top:93px;width:251px"><div class="a" style="left:78px;top:0;width:1px;height:17px;background:#f0f0f0"></div><div class="a" style="left:82px;top:0;width:1px;height:17px;background:#f0f0f0"></div><div class="a" style="left:108px;top:0;width:1px;height:17px;background:#f0f0f0"></div><div class="a" style="left:134px;top:0;width:1px;height:17px;background:#f0f0f0"></div><div class="a" style="left:174px;top:0;width:1px;height:17px;background:#f0f0f0"></div><div class="a" style="left:200px;top:0;width:1px;height:17px;background:#f0f0f0"></div><div class="a" style="left:226px;top:0;width:1px;height:17px;background:#f0f0f0"></div></div><div class="row" style="top:110px;width:251px"><div class="a" style="left:78px;top:0;width:1px;height:17px;background:#f0f0f0"></div><div class="a" style="left:82px;top:0;width:1px;height:17px;background:#f0f0f0"></div><div class="a" style="left:108px;top:0;width:1px;height:17px;background:#f0f0f0"></div><div class="a" style="left:134px;top:0;width:1px;height:17px;background:#f0f0f0"></div><div class="a" style="left:174px;top:0;width:1px;height:17px;background:#f0f0f0"></div><div class="a" style="left:200px;top:0;width:1px;height:17px;background:#f0f0f0"></div><div class="a" style="left:226px;top:0;width:1px;height:17px;background:#f0f0f0"></div></div><div class="row" style="top:127px;width:251px"><div class="a" style="left:78px;top:0;width:1px;height:17px;background:#f0f0f0"></div><div class="a" style="left:82px;top:0;width:1px;height:17px;background:#f0f0f0"></div><div class="a" style="left:108px;top:0;width:1px;height:17px;background:#f0f0f0"></div><div class="a" style="left:134px;top:0;width:1px;height:17px;background:#f0f0f0"></div><div class="a" style="left:174px;top:0;width:1px;height:17px;background:#f0f0f0"></div><div class="a" style="left:200px;top:0;width:1px;height:17px;background:#f0f0f0"></div><div class="a" style="left:226px;top:0;width:1px;height:17px;background:#f0f0f0"></div></div><div class="row" style="top:144px;width:251px"><div class="a" style="left:78px;top:0;width:1px;height:17px;background:#f0f0f0"></div><div class="a" style="left:82px;top:0;width:1px;height:17px;background:#f0f0f0"></div><div class="a" style="left:108px;top:0;width:1px;height:17px;background:#f0f0f0"></div><div class="a" style="left:134px;top:0;width:1px;height:17px;background:#f0f0f0"></div><div class="a" style="left:174px;top:0;width:1px;height:17px;background:#f0f0f0"></div><div class="a" style="left:200px;top:0;width:1px;height:17px;background:#f0f0f0"></div><div class="a" style="left:226px;top:0;width:1px;height:17px;background:#f0f0f0"></div></div><div class="row" style="top:161px;width:251px"><div class="a" style="left:78px;top:0;width:1px;height:17px;background:#f0f0f0"></div><div class="a" style="left:82px;top:0;width:1px;height:17px;background:#f0f0f0"></div><div class="a" style="left:108px;top:0;width:1px;height:17px;background:#f0f0f0"></div><div class="a" style="left:134px;top:0;width:1px;height:17px;background:#f0f0f0"></div><div class="a" style="left:174px;top:0;width:1px;height:17px;background:#f0f0f0"></div><div class="a" style="left:200px;top:0;width:1px;height:17px;background:#f0f0f0"></div><div class="a" style="left:226px;top:0;width:1px;height:17px;background:#f0f0f0"></div></div><div class="row" style="top:178px;width:251px"><div class="a" style="left:78px;top:0;width:1px;height:17px;background:#f0f0f0"></div><div class="a" style="left:82px;top:0;width:1px;height:17px;background:#f0f0f0"></div><div class="a" style="left:108px;top:0;width:1px;height:17px;background:#f0f0f0"></div><div class="a" style="left:134px;top:0;width:1px;height:17px;background:#f0f0f0"></div><div class="a" style="left:174px;top:0;width:1px;height:17px;background:#f0f0f0"></div><div class="a" style="left:200px;top:0;width:1px;height:17px;background:#f0f0f0"></div><div class="a" style="left:226px;top:0;width:1px;height:17px;background:#f0f0f0"></div></div><div class="row" style="top:195px;width:251px"><div class="a" style="left:78px;top:0;width:1px;height:17px;background:#f0f0f0"></div><div class="a" style="left:82px;top:0;width:1px;height:17px;background:#f0f0f0"></div><div class="a" style="left:108px;top:0;width:1px;height:17px;background:#f0f0f0"></div><div class="a" style="left:134px;top:0;width:1px;height:17px;background:#f0f0f0"></div><div class="a" style="left:174px;top:0;width:1px;height:17px;background:#f0f0f0"></div><div class="a" style="left:200px;top:0;width:1px;height:17px;background:#f0f0f0"></div><div class="a" style="left:226px;top:0;width:1px;height:17px;background:#f0f0f0"></div></div><div class="sb" style="left:0;top:203px;width:251px;height:17px"><div class="th" style="left:17px;top:1px;width:193px;height:15px"></div><svg class="a" style="left:5px;top:4px" width="7" height="9" viewBox="0 0 7 9" fill="none" stroke="#505050" stroke-width="1.900"><path d="M5.500 1L2 4.500 5.500 8"/></svg><svg class="a" style="left:239px;top:4px" width="7" height="9" viewBox="0 0 7 9" fill="none" stroke="#505050" stroke-width="1.900"><path d="M1.500 1L5 4.500 1.500 8"/></svg></div></div></div>
<div class="a" style="left:554px;top:80px;width:18px;height:712px;background:linear-gradient(90deg,rgba(0,0,0,.24),rgba(0,0,0,.08) 45%,rgba(0,0,0,0))"></div><div class="a" style="left:0;top:797px;width:1091px;height:24px;background:linear-gradient(#cfcfcf 0,#e6e6e6 4px,#f0f0f0 9px)"><div class="a" style="left:198px;top:3px;width:1px;height:21px;background:#d7d7d7"></div><div class="a" style="left:298px;top:3px;width:1px;height:21px;background:#d7d7d7"></div><div class="a" style="left:698px;top:3px;width:1px;height:21px;background:#d7d7d7"></div><span class="t" style="left:704px;top:6px;font-size:12px;line-height:16px">Done.</span></div>
</div></body></html>
